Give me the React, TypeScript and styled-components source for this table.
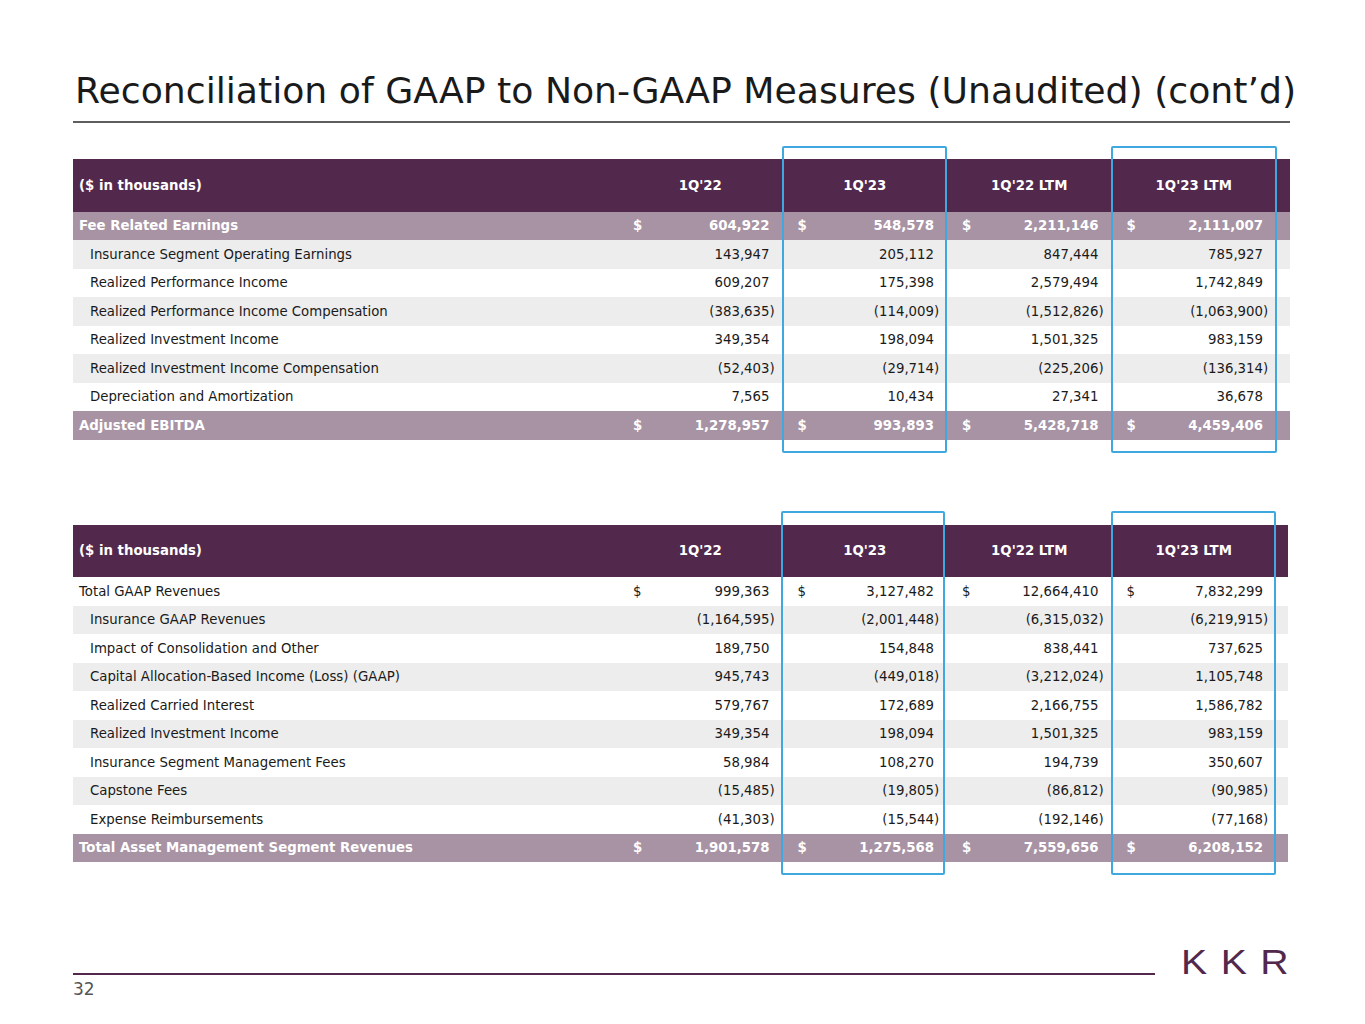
import styled, { createGlobalStyle } from "styled-components";

const GlobalStyle = createGlobalStyle`
  body {
    margin: 0;
    background: #fff;
    font-family: "DejaVu Sans", Verdana, sans-serif;
  }
`;

type Kind = "plain" | "sub" | "total";

interface RowData {
  label: string;
  kind: Kind;
  dollar?: boolean;
  values: string[];
}

const earnings: RowData[] = [
  { label: "Fee Related Earnings", kind: "total", dollar: true, values: ["604,922", "548,578", "2,211,146", "2,111,007"] },
  { label: "Insurance Segment Operating Earnings", kind: "sub", values: ["143,947", "205,112", "847,444", "785,927"] },
  { label: "Realized Performance Income", kind: "sub", values: ["609,207", "175,398", "2,579,494", "1,742,849"] },
  { label: "Realized Performance Income Compensation", kind: "sub", values: ["(383,635)", "(114,009)", "(1,512,826)", "(1,063,900)"] },
  { label: "Realized Investment Income", kind: "sub", values: ["349,354", "198,094", "1,501,325", "983,159"] },
  { label: "Realized Investment Income Compensation", kind: "sub", values: ["(52,403)", "(29,714)", "(225,206)", "(136,314)"] },
  { label: "Depreciation and Amortization", kind: "sub", values: ["7,565", "10,434", "27,341", "36,678"] },
  { label: "Adjusted EBITDA", kind: "total", dollar: true, values: ["1,278,957", "993,893", "5,428,718", "4,459,406"] },
];

const revenues: RowData[] = [
  { label: "Total GAAP Revenues", kind: "plain", dollar: true, values: ["999,363", "3,127,482", "12,664,410", "7,832,299"] },
  { label: "Insurance GAAP Revenues", kind: "sub", values: ["(1,164,595)", "(2,001,448)", "(6,315,032)", "(6,219,915)"] },
  { label: "Impact of Consolidation and Other", kind: "sub", values: ["189,750", "154,848", "838,441", "737,625"] },
  { label: "Capital Allocation-Based Income (Loss) (GAAP)", kind: "sub", values: ["945,743", "(449,018)", "(3,212,024)", "1,105,748"] },
  { label: "Realized Carried Interest", kind: "sub", values: ["579,767", "172,689", "2,166,755", "1,586,782"] },
  { label: "Realized Investment Income", kind: "sub", values: ["349,354", "198,094", "1,501,325", "983,159"] },
  { label: "Insurance Segment Management Fees", kind: "sub", values: ["58,984", "108,270", "194,739", "350,607"] },
  { label: "Capstone Fees", kind: "sub", values: ["(15,485)", "(19,805)", "(86,812)", "(90,985)"] },
  { label: "Expense Reimbursements", kind: "sub", values: ["(41,303)", "(15,544)", "(192,146)", "(77,168)"] },
  { label: "Total Asset Management Segment Revenues", kind: "total", dollar: true, values: ["1,901,578", "1,275,568", "7,559,656", "6,208,152"] },
];

const periods = ["1Q'22", "1Q'23", "1Q'22 LTM", "1Q'23 LTM"];

const Page = styled.div`
  width: 1365px;
  height: 1024px;
  box-sizing: border-box;
  padding: 69px 75px 0 73px;
  display: flex;
  flex-direction: column;
`;

const Title = styled.h1`
  margin: 0 0 0 2px;
  font-size: 36.2px;
  font-weight: normal;
  line-height: 44px;
  color: #1a1a1a;
  white-space: nowrap;
`;

const TitleRule = styled.div`
  height: 2px;
  background: #5e5e5e;
  margin-top: 8px;
  width: 1217px;
`;

const TableWrap = styled.div<{ $top: number; $width: number }>`
  position: relative;
  margin-top: ${(p) => p.$top}px;
  width: ${(p) => p.$width}px;
`;

const Row = styled.div<{ $bg: string }>`
  display: grid;
  grid-template-columns: 545px repeat(4, 164.5px) 1fr;
  height: 28.5px;
  align-items: center;
  background: ${(p) => p.$bg};
  font-size: 13.3px;
`;

const HeadRow = styled(Row)`
  height: 52.5px;
  color: #fff;
  font-weight: bold;
`;

const Label = styled.div<{ $kind: Kind | "head" }>`
  padding-left: ${(p) => (p.$kind === "sub" ? 17 : 6)}px;
  color: ${(p) => (p.$kind === "total" || p.$kind === "head" ? "#fff" : "#1a1a1a")};
  font-weight: ${(p) => (p.$kind === "total" || p.$kind === "head" ? "bold" : "normal")};
  white-space: nowrap;
`;

const HeadCell = styled.div`
  text-align: center;
`;

const Value = styled.div<{ $bold: boolean }>`
  display: flex;
  justify-content: space-between;
  padding: 0 7px 0 15px;
  color: ${(p) => (p.$bold ? "#fff" : "#1a1a1a")};
  font-weight: ${(p) => (p.$bold ? "bold" : "normal")};
  white-space: nowrap;
`;

const Paren = styled.span`
  display: inline-block;
  width: 6px;
`;

const Highlight = styled.div<{ $left: number; $width: number; $top: number; $bottom: number }>`
  position: absolute;
  left: ${(p) => p.$left}px;
  width: ${(p) => p.$width}px;
  top: ${(p) => p.$top}px;
  bottom: ${(p) => p.$bottom}px;
  box-sizing: border-box;
  border: 2px solid #3fa9df;
  border-radius: 2px;
  pointer-events: none;
`;

const Footer = styled.div`
  margin-top: auto;
  margin-bottom: 25px;
  width: 1217px;
`;

const FooterLine = styled.div`
  display: flex;
  align-items: flex-end;
  gap: 28px;
`;

const FooterRule = styled.div`
  flex: 1;
  height: 2px;
  background: #52284d;
`;

const Logo = styled.div`
  width: 107px;
  height: 26px;
  display: flex;
  justify-content: flex-end;
  align-items: flex-end;
`;

const LogoText = styled.span`
  font-family: "Liberation Sans", Arial, sans-serif;
  font-size: 35px;
  line-height: 26px;
  letter-spacing: 12px;
  margin-right: -12px;
  color: #52284d;
  white-space: nowrap;
  transform: scaleX(1.12);
  transform-origin: right bottom;
`;

const PageNum = styled.div`
  font-size: 17px;
  color: #555;
  margin-top: 4px;
`;

function Amount({ text }: { text: string }) {
  const neg = text.startsWith("(");
  const body = neg ? text.slice(0, -1) : text;
  return (
    <span>
      {body}
      <Paren>{neg ? ")" : ""}</Paren>
    </span>
  );
}

function DataTable({ rows, top, width, boxes }: { rows: RowData[]; top: number; width: number; boxes: { left: number; width: number; top: number; bottom: number }[] }) {
  return (
    <TableWrap $top={top} $width={width}>
      <HeadRow $bg="#52284d">
        <Label $kind="head">($ in thousands)</Label>
        {periods.map((p) => (
          <HeadCell key={p}>{p}</HeadCell>
        ))}
        <div />
      </HeadRow>
      {rows.map((r, i) => {
        const bold = r.kind === "total";
        const bg = bold ? "#a893a5" : i % 2 === 1 ? "#ededed" : "#fff";
        return (
          <Row key={r.label + i} $bg={bg}>
            <Label $kind={r.kind}>{r.label}</Label>
            {r.values.map((v, j) => (
              <Value key={j} $bold={bold}>
                <span>{r.dollar ? "$" : ""}</span>
                <Amount text={v} />
              </Value>
            ))}
            <div />
          </Row>
        );
      })}
      {boxes.map((b, k) => (
        <Highlight key={k} $left={b.left} $width={b.width} $top={b.top} $bottom={b.bottom} />
      ))}
    </TableWrap>
  );
}

export default function App() {
  return (
    <>
      <GlobalStyle />
      <Page>
        <Title>Reconciliation of GAAP to Non-GAAP Measures (Unaudited) (cont’d)</Title>
        <TitleRule />
        <DataTable
          rows={earnings}
          top={36}
          width={1217}
          boxes={[
            { left: 709, width: 165, top: -13, bottom: -13 },
            { left: 1038, width: 166, top: -13, bottom: -13 },
          ]}
        />
        <DataTable
          rows={revenues}
          top={85}
          width={1215}
          boxes={[
            { left: 708, width: 164, top: -14, bottom: -13 },
            { left: 1038, width: 165, top: -14, bottom: -13 },
          ]}
        />
        <Footer>
          <FooterLine>
            <FooterRule />
            <Logo>
              <LogoText>KKR</LogoText>
            </Logo>
          </FooterLine>
          <PageNum>32</PageNum>
        </Footer>
      </Page>
    </>
  );
}
